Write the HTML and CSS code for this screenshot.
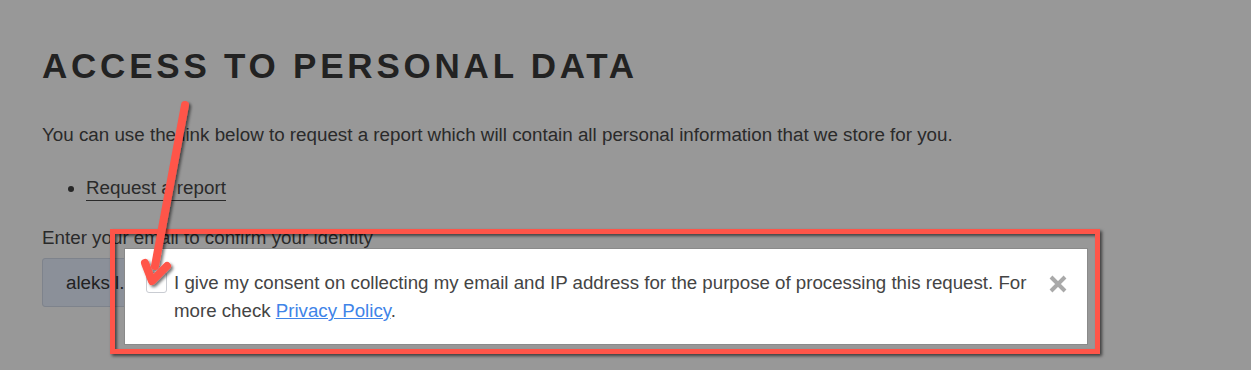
FILE: index.html
```html
<!DOCTYPE html>
<html lang="en">
<head>
<meta charset="utf-8">
<title>Access to personal data</title>
<link rel="stylesheet" href="styles.css">
</head>
<body>
<main class="page">
  <h1 class="title">ACCESS TO PERSONAL DATA</h1>
  <p class="intro">You can use the link below to request a report which will contain all personal information that we store for you.</p>
  <ul class="links">
    <li><a href="#" class="report-link">Request a report</a></li>
  </ul>
  <label class="email-label">Enter your email to confirm your identity</label>
  <div class="email-row">
    <div class="email-input">aleks l.</div>
  </div>
</main>

<div class="consent-popup">
  <span class="checkbox"></span>
  <p class="consent-text">I give my consent on collecting my email and IP address for the purpose of processing this request. For more check <a href="#" class="policy-link">Privacy Policy</a>.</p>
  <button class="close" aria-label="Close">
    <svg width="20" height="20" viewBox="0 0 20 20"><path d="M3 3 L17 17 M17 3 L3 17" stroke="#a9a9a9" stroke-width="4" stroke-linecap="butt"/></svg>
  </button>
</div>

<div class="annotation-box"></div>

<svg class="annotation-arrow" width="260" height="370" viewBox="0 0 260 370">
  <defs>
    <filter id="sh" x="-50%" y="-50%" width="200%" height="200%">
      <feDropShadow dx="2" dy="2" stdDeviation="1.5" flood-color="#000" flood-opacity="0.55"/>
    </filter>
  </defs>
  <g filter="url(#sh)" fill="none" stroke="#ff5549" stroke-linecap="round" stroke-linejoin="round">
    <path d="M185 105 L155 266" stroke-width="8"/>
    <path d="M145 263 L152 281 L167 266" stroke-width="8"/>
  </g>
</svg>
</body>
</html>
```

FILE: styles.css
```css
html, body {
  margin: 0;
  padding: 0;
}
body {
  background: #989898;
  font-family: "Liberation Sans", Arial, sans-serif;
  color: #262626;
  width: 1251px;
  height: 370px;
  overflow: hidden;
  position: relative;
}
.page {
  padding: 46px 0 0 42px;
}
.title {
  margin: 0;
  font-size: 35px;
  line-height: 40px;
  font-weight: bold;
  letter-spacing: 0.108em;
  color: #222;
}
.intro {
  margin: 37px 0 0;
  font-size: 18.8px;
  line-height: 24px;
  color: #2a2a2a;
}
.links {
  margin: 29px 0 0;
  padding-left: 44px;
  font-size: 18.8px;
  line-height: 24px;
}
.report-link {
  color: #2a2a2a;
  text-decoration: none;
  border-bottom: 1px solid #2a2a2a;
  padding-bottom: 2px;
}
.email-label {
  display: block;
  margin-top: 26px;
  font-size: 18.8px;
  line-height: 24px;
  color: #2a2a2a;
}
.email-row {
  margin-top: 8px;
}
.email-input {
  width: 300px;
  height: 49px;
  box-sizing: border-box;
  background: #8b9099;
  border: 1px solid #7e838c;
  border-radius: 3px;
  padding-left: 23px;
  font-size: 18.8px;
  line-height: 47px;
  color: #222;
}
.consent-popup {
  position: absolute;
  left: 124px;
  top: 248px;
  width: 964px;
  height: 97px;
  box-sizing: border-box;
  background: #fff;
  border: 1px solid #8a8a8a;
  padding: 20px 20px 0 21px;
  display: flex;
  align-items: flex-start;
}
.checkbox {
  flex: none;
  width: 19px;
  height: 19px;
  margin-top: 3px;
  border: 1px solid #c9ccd2;
  border-radius: 3px;
  background: #fff;
}
.consent-text {
  margin: 0 0 0 7px;
  width: 872px;
  flex: none;
  font-size: 18.7px;
  line-height: 28px;
  color: #444;
}
.policy-link {
  color: #3f84e8;
  text-decoration: underline;
}
.close {
  flex: none;
  margin: 5px 0 0 2px;
  padding: 0;
  border: 0;
  background: none;
  width: 20px;
  height: 20px;
}
.annotation-box {
  position: absolute;
  left: 110px;
  top: 229px;
  width: 990px;
  height: 125px;
  box-sizing: border-box;
  border: 5px solid #ff5549;
  box-shadow: 2px 2px 3px rgba(0,0,0,0.6), inset 2px 2px 3px rgba(0,0,0,0.55);
}
.annotation-arrow {
  position: absolute;
  left: 0;
  top: 0;
}
```
